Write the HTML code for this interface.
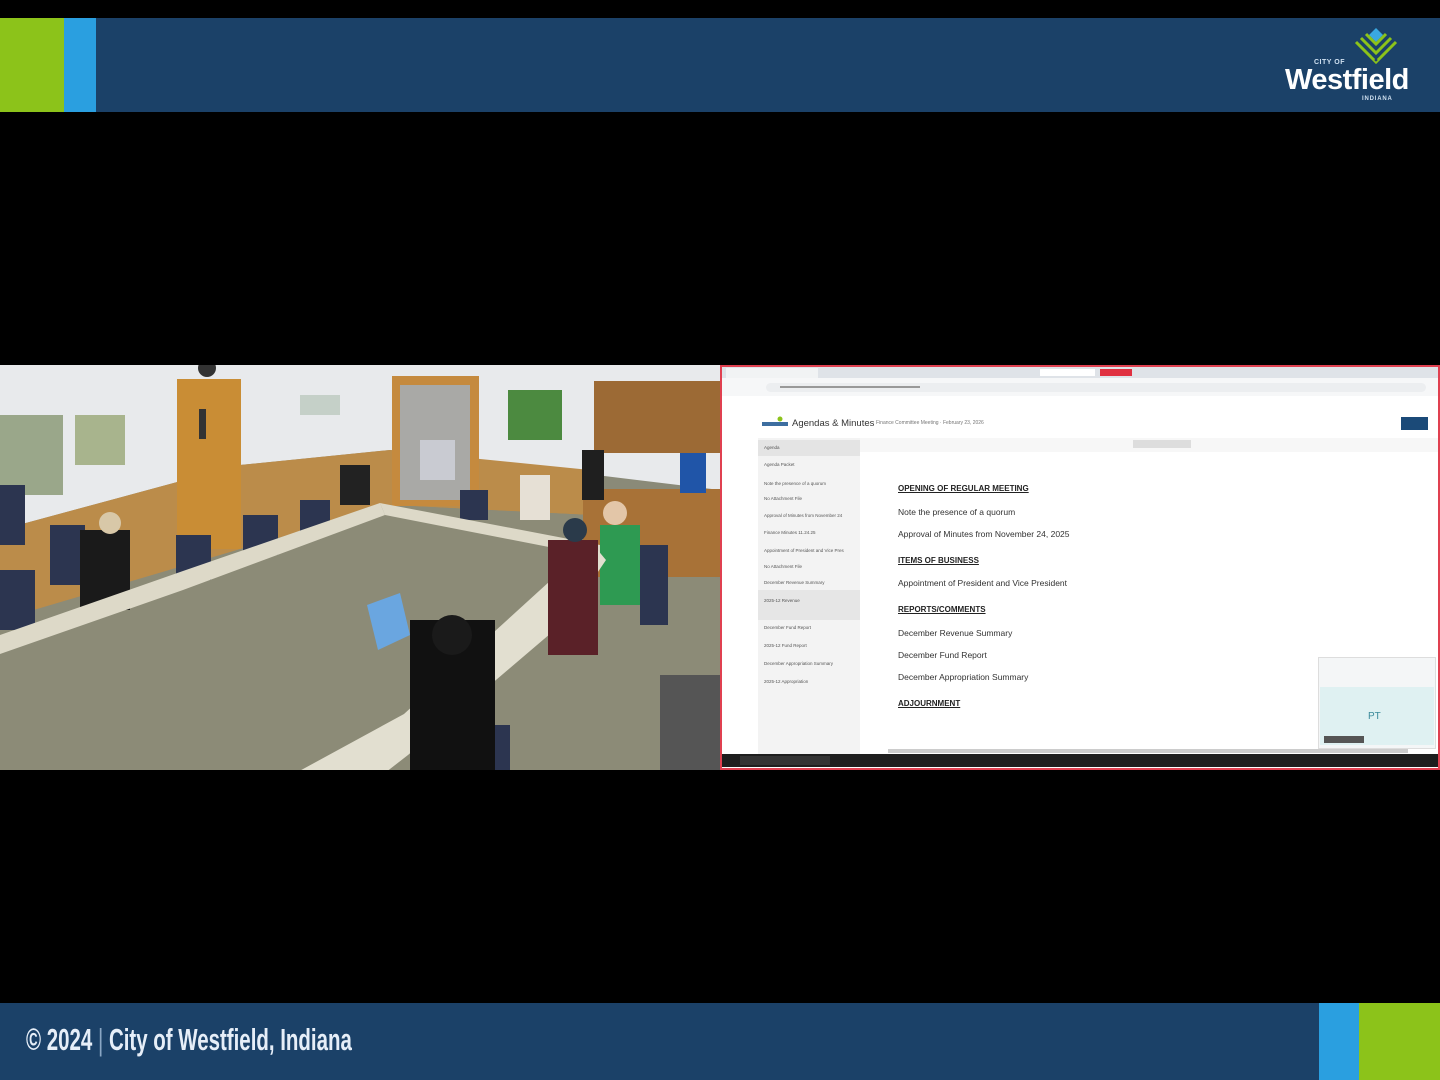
<!DOCTYPE html>
<html><head><meta charset="utf-8"><style>
*{margin:0;padding:0;box-sizing:border-box}
body{width:1440px;height:1080px;background:#000;position:relative;overflow:hidden;font-family:"Liberation Sans",sans-serif}
.abs{position:absolute}
.doc div{position:absolute;left:898px;font-size:8.5px;color:#333;white-space:nowrap}
.doc .h{font-weight:bold;text-decoration:underline;font-size:8px;color:#222}
.sb div{position:absolute;left:764px;font-size:4.5px;color:#555;white-space:nowrap}
</style></head><body>
<div class="abs" style="left:0;top:18px;width:1440px;height:94px;background:#1b4168"></div>
<div class="abs" style="left:0;top:18px;width:64px;height:94px;background:#8cc31a"></div>
<div class="abs" style="left:64px;top:18px;width:32px;height:94px;background:#2a9fe0"></div>
<svg class="abs" style="left:1350px;top:26px" width="52" height="44" viewBox="0 0 52 44">
<path d="M26 2 L33 9 L26 16 L19 9Z" fill="#3aa8e0"/>
<g stroke="#8cc31a" stroke-width="3" fill="none">
<path d="M6 16 L26 36 L46 16"/><path d="M11 12 L26 27 L41 12"/><path d="M16 8 L26 18 L36 8"/>
</g>
<circle cx="24" cy="30" r="1.4" fill="#1b4168"/><circle cx="28" cy="30" r="1.4" fill="#1b4168"/><circle cx="26" cy="34" r="1.4" fill="#1b4168"/>
</svg>
<div class="abs" style="left:1314px;top:59px;font-size:7px;color:#cfe0f0;font-weight:bold;letter-spacing:.5px">CITY OF</div>
<div class="abs" style="left:1285px;top:64px;font-size:29px;color:#fff;font-weight:bold;letter-spacing:-0.5px">Westfield</div>
<div class="abs" style="left:1362px;top:96px;font-size:6px;color:#cfe0f0;font-weight:bold;letter-spacing:.8px">INDIANA</div>

<svg class="abs" style="left:0;top:365px" width="720" height="405" viewBox="0 0 720 405">
<rect width="720" height="405" fill="#8a8a78"/>
<polygon points="0,0 720,0 720,125 390,85 240,100 0,165" fill="#e8eaec"/>
<polygon points="0,165 240,100 390,85 590,105 590,150 390,140 0,255" fill="#bb8c4a"/>
<polygon points="0,255 390,140 590,150 720,215 720,405 0,405" fill="#8c8b77"/>
<rect x="177" y="14" width="64" height="170" fill="#c98d35"/>
<rect x="199" y="44" width="7" height="30" fill="#333"/>
<rect x="392" y="11" width="87" height="130" fill="#c58a3e"/>
<rect x="400" y="20" width="70" height="115" fill="#a9a9a6"/>
<rect x="594" y="16" width="126" height="72" fill="#9c6a35"/>
<rect x="583" y="124" width="137" height="88" fill="#a87237"/>
<rect x="582" y="85" width="22" height="50" fill="#1f1f1f"/>
<rect x="680" y="88" width="26" height="40" fill="#2055a8"/>
<rect x="0" y="50" width="63" height="80" fill="#9aa78a"/>
<rect x="75" y="50" width="50" height="50" fill="#a8b48d"/>
<rect x="508" y="25" width="54" height="50" fill="#4c8a40"/>
<rect x="300" y="30" width="40" height="20" fill="#c5d0c8"/>
<circle cx="207" cy="3" r="9" fill="#333"/>
<!-- chairs behind -->
<g fill="#2c3550">
<rect x="0" y="120" width="25" height="60"/><rect x="50" y="160" width="35" height="60"/><rect x="0" y="205" width="35" height="60"/>
<rect x="176" y="170" width="35" height="45"/><rect x="243" y="150" width="35" height="40"/><rect x="300" y="135" width="30" height="35"/>
<rect x="460" y="125" width="28" height="30"/><rect x="640" y="180" width="28" height="80"/>
</g>
<!-- people behind -->
<rect x="80" y="165" width="50" height="80" fill="#1a1a1a"/><circle cx="110" cy="158" r="11" fill="#d8c8a8"/>
<rect x="340" y="100" width="30" height="40" fill="#222"/>
<rect x="420" y="75" width="35" height="40" fill="#c9cbd2"/>
<rect x="520" y="110" width="30" height="45" fill="#e6e0d5"/>
<rect x="600" y="160" width="40" height="80" fill="#2e9a52"/><circle cx="615" cy="148" r="12" fill="#e3c6a8"/>
<!-- tables -->
<polygon points="0,270 183,206 380,138 385,150 183,225 0,289" fill="#ddd9c8"/>
<polygon points="380,138 600,180 600,192 385,150" fill="#ddd9c8"/>
<polygon points="160,482 404,349 550,216 596,183 606,195 564,257 408,390 202,550" fill="#e2dfd0"/>
<rect x="548" y="175" width="50" height="115" fill="#5a2128"/><circle cx="575" cy="165" r="12" fill="#2a3a4a"/>
<g fill="#2c3550"><rect x="300" y="450" width="80" height="105"/><rect x="420" y="360" width="90" height="140"/>
<rect x="660" y="310" width="60" height="95" fill="#555"/></g>
<rect x="410" y="255" width="85" height="230" fill="#111"/><circle cx="452" cy="270" r="20" fill="#1a1a1a"/>
<polygon points="367,240 400,228 410,270 378,285" fill="#6aa6e0"/>
</svg>

<div class="abs" style="left:720px;top:365px;width:720px;height:405px;background:#fff;border:2px solid #e04050"></div>
<div class="abs" style="left:722px;top:367px;width:716px;height:11px;background:#dfe3e8"></div>
<div class="abs" style="left:726px;top:368px;width:92px;height:10px;background:#f1f3f4"></div>
<div class="abs" style="left:1040px;top:369px;width:55px;height:7px;background:#fff"></div>
<div class="abs" style="left:1100px;top:369px;width:32px;height:7px;background:#e03040"></div>
<div class="abs" style="left:722px;top:378px;width:716px;height:18px;background:#f6f7f8"></div>
<div class="abs" style="left:766px;top:383px;width:660px;height:9px;background:#eceef0;border-radius:5px"></div>
<div class="abs" style="left:780px;top:386px;width:140px;height:2px;background:#999"></div>
<svg class="abs" style="left:762px;top:416px" width="26" height="14"><rect x="0" y="6" width="26" height="4" fill="#3d6ea0"/><circle cx="18" cy="3" r="2.5" fill="#8cc31a"/></svg>
<div class="abs" style="left:792px;top:418px;font-size:9.5px;color:#333">Agendas &amp; Minutes</div>
<div class="abs" style="left:876px;top:420px;font-size:5px;color:#777">Finance Committee Meeting · February 23, 2026</div>
<div class="abs" style="left:1401px;top:417px;width:27px;height:13px;background:#1b4a78"></div>
<div class="abs" style="left:758px;top:438px;width:102px;height:318px;background:#f3f3f3"></div>
<div class="abs" style="left:758px;top:440px;width:102px;height:16px;background:#e4e4e4"></div>
<div class="abs" style="left:758px;top:590px;width:102px;height:30px;background:#e6e6e6"></div>
<div class="abs" style="left:860px;top:438px;width:578px;height:14px;background:#f7f7f7"></div>
<div class="abs" style="left:1133px;top:440px;width:58px;height:8px;background:#ddd"></div>
<div class="sb">
<div style="top:445px">Agenda</div><div style="top:462px">Agenda Packet</div><div style="top:481px">Note the presence of a quorum</div>
<div style="top:496px">No Attachment File</div><div style="top:513px">Approval of Minutes from November 24</div>
<div style="top:530px">Finance Minutes 11.24.25</div><div style="top:548px">Appointment of President and Vice Pres</div>
<div style="top:564px">No Attachment File</div><div style="top:580px">December Revenue Summary</div>
<div style="top:598px">2025-12 Revenue</div><div style="top:625px">December Fund Report</div>
<div style="top:643px">2025-12 Fund Report</div><div style="top:661px">December Appropriation Summary</div>
<div style="top:679px">2025-12 Appropriation</div>
</div>
<div class="doc">
<div class="h" style="top:484px">OPENING OF REGULAR MEETING</div>
<div style="top:507px">Note the presence of a quorum</div>
<div style="top:529px">Approval of Minutes from November 24, 2025</div>
<div class="h" style="top:556px">ITEMS OF BUSINESS</div>
<div style="top:578px">Appointment of President and Vice President</div>
<div class="h" style="top:605px">REPORTS/COMMENTS</div>
<div style="top:628px">December Revenue Summary</div>
<div style="top:650px">December Fund Report</div>
<div style="top:672px">December Appropriation Summary</div>
<div class="h" style="top:699px">ADJOURNMENT</div>
</div>
<div class="abs" style="left:1318px;top:657px;width:118px;height:92px;background:#f4f6f7;border:1px solid #ddd"></div>
<div class="abs" style="left:1320px;top:687px;width:114px;height:58px;background:#dff1f2"></div>
<div class="abs" style="left:1368px;top:711px;font-size:10px;color:#3a8a9a">PT</div>
<div class="abs" style="left:1324px;top:736px;width:40px;height:7px;background:#555"></div>
<div class="abs" style="left:888px;top:749px;width:520px;height:4px;background:#ccc"></div>
<div class="abs" style="left:722px;top:754px;width:716px;height:13px;background:#1e1e1e"></div>
<div class="abs" style="left:740px;top:756px;width:90px;height:9px;background:#333"></div>

<div class="abs" style="left:0;top:1003px;width:1440px;height:77px;background:#1b4168"></div>
<div class="abs" style="left:1319px;top:1003px;width:40px;height:77px;background:#2a9fe0"></div>
<div class="abs" style="left:1359px;top:1003px;width:81px;height:77px;background:#8cc31a"></div>
<div class="abs" style="left:26px;top:1022px;font-size:31px;color:#e6eef8;white-space:nowrap;font-weight:bold;transform:scaleX(0.66);transform-origin:left top">© 2024 <span style="color:#8aa6c4;font-weight:normal">|</span> City of Westfield, Indiana</div>
</body></html>
